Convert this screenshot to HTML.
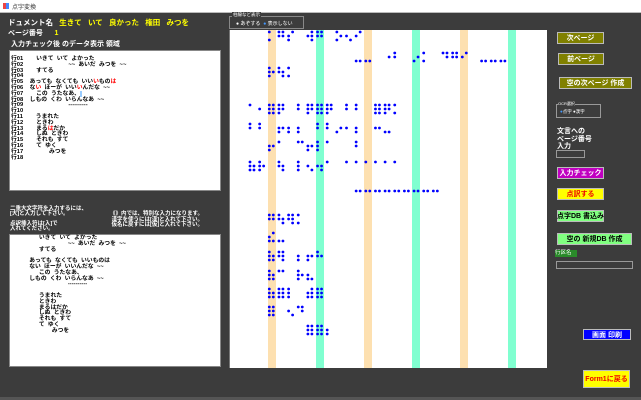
<!DOCTYPE html>
<html><head><meta charset="utf-8"><style>
*{margin:0;padding:0;box-sizing:border-box}
body{width:641px;height:400px;overflow:hidden;background:#3c3c3c;font-family:"Liberation Sans","Noto Sans CJK JP",sans-serif;position:relative;color:#fff}
.a{position:absolute;white-space:pre}
.t{font-size:6px;line-height:6px}
.btn{position:absolute;border:1px solid #bbb;font-size:7px;font-weight:bold;display:flex;align-items:center;justify-content:center;white-space:nowrap}
.box{position:absolute;background:#fff;border:1px solid #888}
.row{color:#000;font-size:5.8px;line-height:5.8px;font-weight:bold}
</style></head><body>
<div class="a" style="left:0;top:0;width:641px;height:13px;background:#fff;border-bottom:1px solid #bbb"></div>
<div class="a" style="left:3px;top:3px;width:6px;height:6px;background:linear-gradient(90deg,#e44 50%,#48f 50%)"></div>
<div class="a" style="left:12px;top:2px;font-size:6px;color:#333">点字変換</div>

<div class="a t" style="left:8px;top:19px;font-size:7.5px;line-height:8px;font-weight:bold">ドュメント名 <span style="color:#ff0">  生きて   いて   良かった   権田   みつを</span></div>
<div class="a t" style="left:8px;top:30px;font-size:7px;line-height:8px;font-weight:bold">ページ番号      <span style="color:#ff0">1</span></div>
<div class="a t" style="left:11px;top:41px;font-size:7px;line-height:8px;font-weight:bold">入力チェック後 のデータ表示 領域</div>

<div class="box" style="left:9px;top:50px;width:212px;height:141px"></div>
<div class="a row" style="left:11px;top:57px">行01        いきて  いて  よかった
行02                            ~~  あいだ  みつを  ~~
行03        すてる
行04
行05    あっても  なくても  いい<span style="color:red">い</span>もの<span style="color:red">は</span>
行06    な<span style="color:red">い</span>  ほーが  いい<span style="color:red">い</span>んだな  ~~
行07        この  うたなあ、<span style="background:#9cf"> </span>
行08    しもの  くわ  いらんなあ  ~~
行09                            ----------
行10
行11        うまれた
行12        ときわ
行13        まる<span style="color:red">は</span>だか
行14        しぬ  ときわ
行15        それも  すて
行16        て  ゆく
行17                みつを
行18</div>

<div class="a t" style="left:10px;top:207px;font-size:5.5px;line-height:5px;font-weight:bold">二重大文字符を入力するには、
[大]と入力して下さい。</div>
<div class="a t" style="left:10px;top:222px;font-size:5.5px;line-height:5px;font-weight:bold">点訳挿入符は[入]で
入れてください。</div>
<div class="a t" style="left:110px;top:212px;font-size:5.5px;line-height:5.5px;text-align:right;font-weight:bold">《》内では、特別な入力になります。
漢字を使うには[漢]と入れて下さい。
仮名に戻すには[仮]と入れて下さい。</div>

<div class="box" style="left:9px;top:234px;width:212px;height:133px"></div>
<div class="a row" style="left:26px;top:236px">        いきて  いて  よかった
                          ~~  あいだ  みつを  ~~
        すてる

  あっても  なくても  いいものは
  ない  ほーが  いいんだな  ~~
        この  うたなあ、
  しもの  くわ  いらんなあ  ~~
                          ----------

        うまれた
        ときわ
        まるはだか
        しぬ  ときわ
        それも  すて
        て  ゆく
                みつを</div>

<div class="a" style="left:229px;top:16px;width:75px;height:13px;border:1px solid #888"></div>
<div class="a" style="left:232px;top:12px;font-size:4.5px;background:#3c3c3c;padding:0 1px">柱線など表示</div>
<div class="a" style="left:236px;top:20px;font-size:5px">● あぞする  <span style="color:#49f">●</span> 表示しない</div>

<div class="a" style="left:229px;top:30px;width:318px;height:338px;background:#fff;border-left:1px solid #777"></div>
<div class="a" style="left:268px;top:30px;width:8px;height:338px;background:#fde0b0"></div>
<div class="a" style="left:316px;top:30px;width:8px;height:338px;background:#80ffd0"></div>
<div class="a" style="left:364px;top:30px;width:8px;height:338px;background:#fde0b0"></div>
<div class="a" style="left:412px;top:30px;width:8px;height:338px;background:#80ffd0"></div>
<div class="a" style="left:460px;top:30px;width:8px;height:338px;background:#fde0b0"></div>
<div class="a" style="left:508px;top:30px;width:8px;height:338px;background:#80ffd0"></div>
<svg id="br" class="a" style="left:0;top:0" width="641" height="400"></svg>

<div class="btn" style="left:557px;top:32px;width:47px;height:12px;background:#808000">次ページ</div>
<div class="btn" style="left:558px;top:53px;width:46px;height:12px;background:#808000">前ページ</div>
<div class="btn" style="left:559px;top:77px;width:73px;height:12px;background:#808000">空の次ページ 作成</div>
<div class="a" style="left:556px;top:104px;width:45px;height:14px;border:1px solid #999"></div>
<div class="a" style="left:558px;top:101px;font-size:4px;background:#3c3c3c">OCR選択</div>
<div class="a" style="left:560px;top:109px;font-size:4.5px"><span style="color:#49f">●</span>点字 ●漢字</div>
<div class="a" style="left:557px;top:128px;font-size:7px;line-height:7.5px;font-weight:bold">文言への
ページ番号
入力</div>
<div class="a" style="left:556px;top:150px;width:29px;height:8px;border:1px solid #999"></div>
<div class="btn" style="left:557px;top:167px;width:47px;height:12px;background:#c000c0">入力チェック</div>
<div class="btn" style="left:557px;top:188px;width:47px;height:12px;background:#ff0;color:#e00">点訳する</div>
<div class="btn" style="left:557px;top:210px;width:47px;height:12px;background:#80ff80;color:#000">点字DB 書込み</div>
<div class="btn" style="left:557px;top:233px;width:75px;height:12px;background:#80ff80;color:#000">空の 新規DB 作成</div>
<div class="a" style="left:555px;top:250px;width:22px;height:7px;background:#2a8a2a;font-size:5.5px;line-height:7px">行区名</div>
<div class="a" style="left:556px;top:261px;width:77px;height:8px;border:1px solid #999"></div>
<div class="btn" style="left:583px;top:329px;width:48px;height:11px;background:#00f;color:#fff">画面 印刷</div>
<div class="btn" style="left:583px;top:370px;width:47px;height:18px;background:#ff0;color:#e00">Form1に戻る</div>
<div class="a" style="left:0;top:397px;width:641px;height:3px;background:#555"></div>

<script>
var L=[[32,2,"⠅⠛⠎⠀⠺⠛⠀⠕⠢⠊"],[53,11,"⠤⠤⠀⠐⠃⠀⠔⠅⠀⠙⠛⠊⠀⠤⠤⠤"],[68,2,"⠗⠳⠅"],
[105,0,"⠁⠂⠿⠟⠀⠃⠟⠿⠟⠀⠃⠃⠀⠿⠟⠅"],[124,0,"⠃⠃⠀⠖⠆⠆⠀⠃⠃⠔⠂⠆⠀⠒⠤"],[142,2,"⠖⠁⠀⠉⠖⠇⠁⠀⠀⠃"],
[162,0,"⠷⠗⠀⠳⠀⠇⠢⠲⠁⠀⠁⠁⠁⠁⠁⠁"],[183,11,"⠤⠤⠤⠤⠤⠤⠤⠤⠤"],[215,2,"⠛⠳⠻⠅"],[233,2,"⠮⠤"],
[252,2,"⠷⠻⠀⠆⠖⠓"],[271,2,"⠷⠉⠀⠗⠦"],[289,2,"⠷⠿⠇⠀⠾⠿"],[307,2,"⠿⠀⠢⠙"],[326,6,"⠿⠿⠆"]];
var s="",bits=[[0,0],[0,1],[0,2],[1,0],[1,1],[1,2]];
L.forEach(function(l){for(var i=0;i<l[2].length;i++){var v=l[2].charCodeAt(i)-0x2800;
for(var b=0;b<6;b++)if(v&(1<<b)){var x=250+(l[1]+i)*9.65+bits[b][0]*4,y=l[0]+bits[b][1]*4;
s+='<circle cx="'+x+'" cy="'+y+'" r="1.4" fill="#00f"/>';}}});
document.getElementById("br").innerHTML=s;
</script>
</body></html>
